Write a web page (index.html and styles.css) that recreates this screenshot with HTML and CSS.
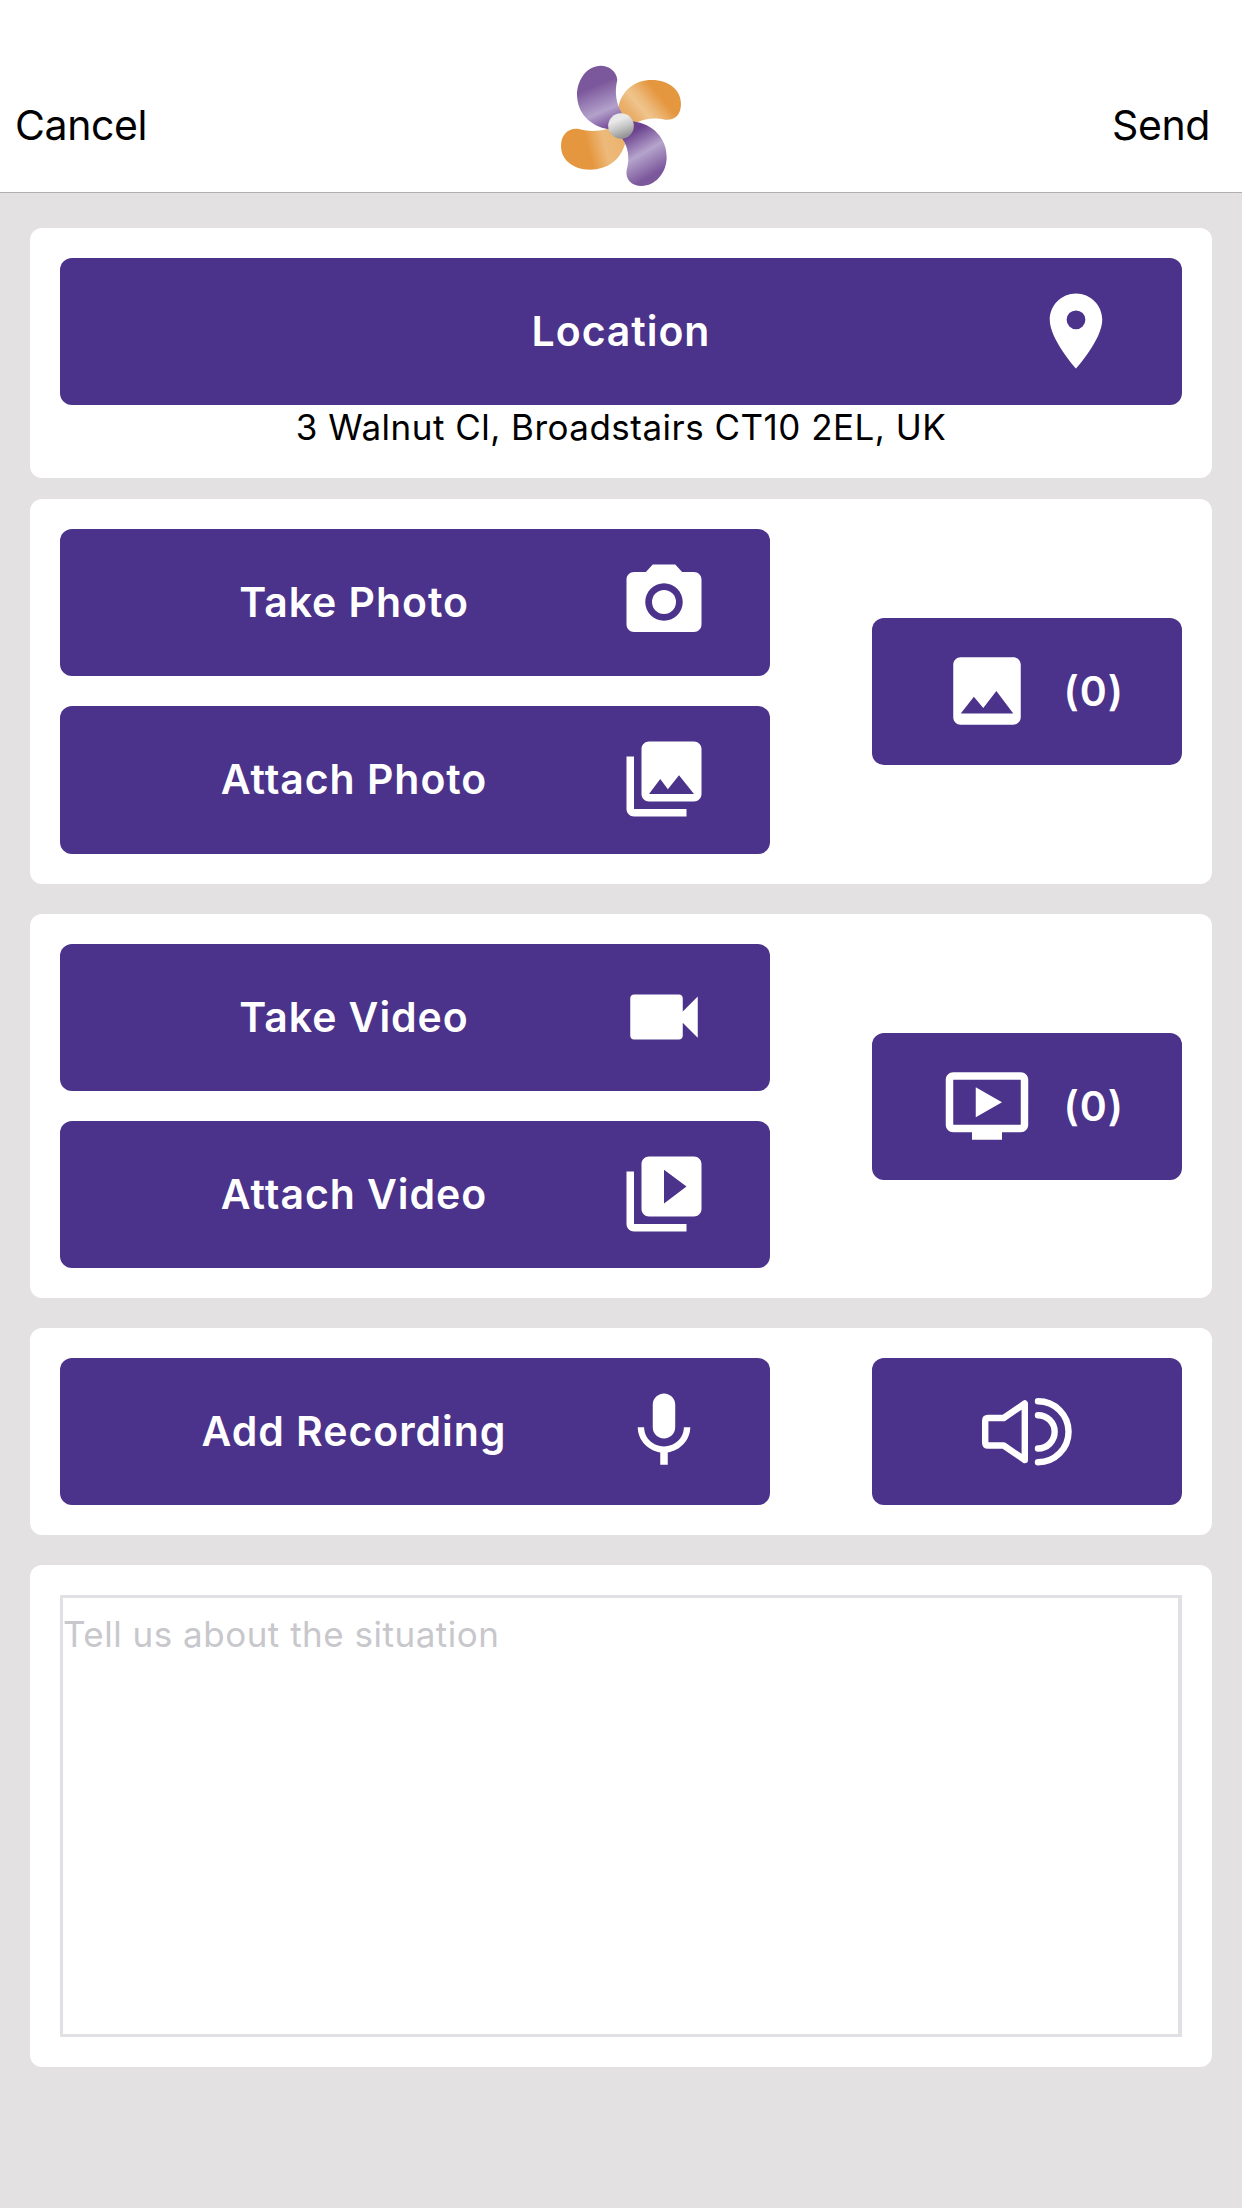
FILE: index.html
```html
<!DOCTYPE html>
<html lang="en">
<head>
  <meta charset="UTF-8">
  <meta name="viewport" content="width=device-width, initial-scale=1.0">
  <title>Report</title>
  <link rel="stylesheet" href="styles.css">
</head>
<body>
  <header class="navbar">
    <a href="#" class="navLink">Cancel</a>
    <svg class="logo" viewBox="60 45 366 366">
      <defs>
        <linearGradient id="purpleTop" x1="0.35" y1="0" x2="0.65" y2="1">
          <stop offset="0.3" stop-color="#7b579b"/>
          <stop offset="0.72" stop-color="#b3a1cb"/>
          <stop offset="1" stop-color="#734a97"/>
        </linearGradient>
        <linearGradient id="purpleBottom" x1="0.3" y1="0" x2="0.7" y2="1">
          <stop offset="0.12" stop-color="#6c428f"/>
          <stop offset="0.48" stop-color="#b5a4cc"/>
          <stop offset="0.85" stop-color="#7b579b"/>
        </linearGradient>
        <linearGradient id="orangeRight" gradientUnits="userSpaceOnUse" x1="250" y1="215" x2="385" y2="100">
          <stop offset="0" stop-color="#e9a75a"/>
          <stop offset="0.2" stop-color="#eab06c"/>
          <stop offset="0.38" stop-color="#efc48c"/>
          <stop offset="0.5" stop-color="#ecb97a"/>
          <stop offset="0.75" stop-color="#e5973f"/>
        </linearGradient>
        <linearGradient id="orangeLeft" gradientUnits="userSpaceOnUse" x1="63" y1="310" x2="255" y2="260">
          <stop offset="0.42" stop-color="#e5973f"/>
          <stop offset="0.68" stop-color="#edba7b"/>
          <stop offset="1" stop-color="#ebb16a"/>
        </linearGradient>
        <linearGradient id="hub" x1="0.35" y1="0.1" x2="0.65" y2="0.9">
          <stop offset="0.2" stop-color="#e8e8e8"/>
          <stop offset="0.55" stop-color="#c8c8c8"/>
          <stop offset="1" stop-color="#969696"/>
        </linearGradient>
      </defs>
      <path fill="url(#orangeRight)" d="M236 168C247 120 285 90 335 90C387 90 423 120 423 162C423 195 402 213 375 209C340 203 320 205 285 219L243 228Z"/>
      <path fill="url(#orangeLeft)" d="M206 236C170 245 145 244 120 238C90 231 63 250 63 288C63 330 100 359 150 359C205 359 240 330 255 283L243 240Z"/>
      <path fill="url(#purpleTop)" d="M232 90C230 62 205 47 183 47C140 47 111 90 111 135C112 190 150 228 206 238L246 190C228 160 223 125 232 90Z"/>
      <path fill="url(#purpleBottom)" d="M278 214C340 222 380 265 380 322C380 370 345 408 305 408C275 408 255 388 260 360C270 325 265 292 246 265Z"/>
      <circle cx="243" cy="228" r="38.5" fill="url(#hub)"/>
    </svg>
    <a href="#" class="navLink navSend">Send</a>
  </header>

  <main class="cards">
    <section class="card cardLocation">
      <button class="btn btnWide">
        <span class="label">Location</span>
        <svg class="icon" viewBox="0 0 24 24"><path d="M12 2C8.13 2 5 5.13 5 9c0 5.25 7 13 7 13s7-7.75 7-13c0-3.87-3.13-7-7-7zm0 9.5a2.5 2.5 0 0 1 0-5 2.5 2.5 0 0 1 0 5z"/></svg>
      </button>
      <p class="address">3 Walnut Cl, Broadstairs CT10 2EL, UK</p>
    </section>

    <section class="card cardPhoto">
      <div class="actions">
        <button class="btn">
          <span class="label">Take Photo</span>
          <svg class="icon" viewBox="0 0 24 24"><circle cx="12" cy="12" r="3.2"/><path d="M9 2L7.17 4H4c-1.1 0-2 .9-2 2v12c0 1.1.9 2 2 2h16c1.1 0 2-.9 2-2V6c0-1.1-.9-2-2-2h-3.17L15 2H9zm3 15c-2.76 0-5-2.24-5-5s2.24-5 5-5 5 2.24 5 5-2.24 5-5 5z"/></svg>
        </button>
        <button class="btn btnTall">
          <span class="label">Attach Photo</span>
          <svg class="icon" viewBox="0 0 24 24"><path d="M22 16V4c0-1.1-.9-2-2-2H8c-1.1 0-2 .9-2 2v12c0 1.1.9 2 2 2h12c1.1 0 2-.9 2-2zm-11-4l2.03 2.71L16 11l4 5H8l3-4zM2 6v14c0 1.1.9 2 2 2h14v-2H4V6H2z"/></svg>
        </button>
      </div>
      <button class="btn btnSmall">
        <svg class="icon" viewBox="0 0 24 24"><path d="M21 19V5c0-1.1-.9-2-2-2H5c-1.1 0-2 .9-2 2v14c0 1.1.9 2 2 2h14c1.1 0 2-.9 2-2zM8.5 13.5l2.5 3.01L14.5 12l4.5 6H5l3.5-4.5z"/></svg>
        <span class="count">(0)</span>
      </button>
    </section>

    <section class="card cardVideo">
      <div class="actions">
        <button class="btn">
          <span class="label">Take Video</span>
          <svg class="icon" viewBox="0 0 24 24"><path d="M17 10.5V7c0-.55-.45-1-1-1H4c-.55 0-1 .45-1 1v10c0 .55.45 1 1 1h12c.55 0 1-.45 1-1v-3.5l4 4v-11l-4 4z"/></svg>
        </button>
        <button class="btn">
          <span class="label">Attach Video</span>
          <svg class="icon" viewBox="0 0 24 24"><path d="M4 6H2v14c0 1.1.9 2 2 2h14v-2H4V6zm16-4H8c-1.1 0-2 .9-2 2v12c0 1.1.9 2 2 2h12c1.1 0 2-.9 2-2V4c0-1.1-.9-2-2-2zm-8 12.5v-9l6 4.5-6 4.5z"/></svg>
        </button>
      </div>
      <button class="btn btnSmall">
        <svg class="icon" viewBox="0 0 24 24"><path d="M21 3H3c-1.11 0-2 .89-2 2v12c0 1.1.89 2 2 2h5v2h8v-2h5c1.1 0 1.99-.9 1.99-2L23 5c0-1.11-.9-2-2-2zm0 14H3V5h18v12zm-5-6l-7 4V7z"/></svg>
        <span class="count">(0)</span>
      </button>
    </section>

    <section class="card cardRecording">
      <div class="actions">
        <button class="btn">
          <span class="label">Add Recording</span>
          <svg class="icon" viewBox="0 0 24 24"><path d="M12 14c1.66 0 2.99-1.34 2.99-3L15 5c0-1.66-1.34-3-3-3S9 3.34 9 5v6c0 1.66 1.34 3 3 3zm5.3-3c0 3-2.54 5.1-5.3 5.1S6.7 14 6.7 11H5c0 3.41 2.72 6.23 6 6.72V21h2v-3.28c3.28-.48 6-3.3 6-6.72h-1.7z"/></svg>
        </button>
      </div>
      <button class="btn btnSmall btnSound">
        <svg class="icon iconLine" viewBox="0 0 90 90"><path d="M6 31H21.700L42.800 16.500V73L21.700 58.500H6Q3.200 58.500 3.200 55.700V33.800Q3.200 31 6 31ZM56 28.200A16.600 16.600 0 0 1 56 61.500M56 14.200A30.500 30.500 0 0 1 56 75.300"/></svg>
      </button>
    </section>

    <section class="card">
      <textarea class="message" placeholder="Tell us about the situation"></textarea>
    </section>
  </main>
</body>
</html>
```
FILE: styles.css
```css
* {
  box-sizing: border-box;
  margin: 0;
  padding: 0;
}
body {
  min-height: 100vh;
  background-color: #e4e1e2;
  font-family: Inter, "Liberation Sans", sans-serif;
  color: #000;
}

.navbar {
  display: grid;
  grid-template-columns: 1fr 122px 1fr;
  align-items: center;
  height: 193px;
  padding: 60px 32px 0 15px;
  background-color: #fff;
  border-bottom: 1px solid #b2afb0;
}
.navLink {
  padding-bottom: 2px;
  color: #000;
  font-size: 41px;
  letter-spacing: -0.4px;
  text-decoration: none;
}
.navSend {
  text-align: right;
}
.logo {
  width: 122px;
  height: 122px;
  margin-left: 8px;
}

.cards {
  display: flex;
  flex-direction: column;
  gap: 30px;
  padding: 35px 30px;
}
.card {
  display: flex;
  justify-content: space-between;
  align-items: center;
  padding: 30px;
  border-radius: 12px;
  background-color: #fff;
}
.cardLocation {
  flex-direction: column;
  justify-content: flex-start;
  height: 250px;
  margin-bottom: -9px;
}
.cardPhoto {
  height: 385px;
}
.actions {
  display: flex;
  flex-direction: column;
  align-self: flex-start;
  gap: 30px;
  width: 710px;
}

.btn {
  display: flex;
  align-items: center;
  width: 100%;
  height: 147px;
  flex-shrink: 0;
  padding: 0 61px 2px 29px;
  border: none;
  border-radius: 12px;
  background-color: #4b328a;
  color: #fff;
  font-family: inherit;
  font-size: 41px;
  font-weight: 600;
  letter-spacing: 0.95px;
  cursor: pointer;
}
.btnWide {
  padding-left: 151px;
}
.btnTall {
  height: 148px;
}
.btnSmall {
  width: 310px;
  padding: 0 58px 1px 70px;
  justify-content: space-between;
}
.btnSound {
  padding: 0;
  justify-content: center;
}
.label {
  flex: 1;
  text-align: center;
}
.icon {
  width: 90px;
  height: 90px;
  fill: currentColor;
}
.iconLine {
  fill: none;
  stroke: currentColor;
  stroke-width: 6.4;
  stroke-linecap: round;
  stroke-linejoin: round;
}

.address {
  font-size: 35px;
  line-height: 44px;
  letter-spacing: 0.48px;
}
.message {
  display: block;
  width: 1122px;
  height: 442px;
  padding: 14px 0;
  border: 3px solid #e0e0e5;
  border-right-width: 4px;
  outline: none;
  resize: none;
  font-family: inherit;
  font-size: 35px;
  line-height: 44px;
  letter-spacing: 0.5px;
}
.message::placeholder {
  color: #c7c7cc;
}
```
